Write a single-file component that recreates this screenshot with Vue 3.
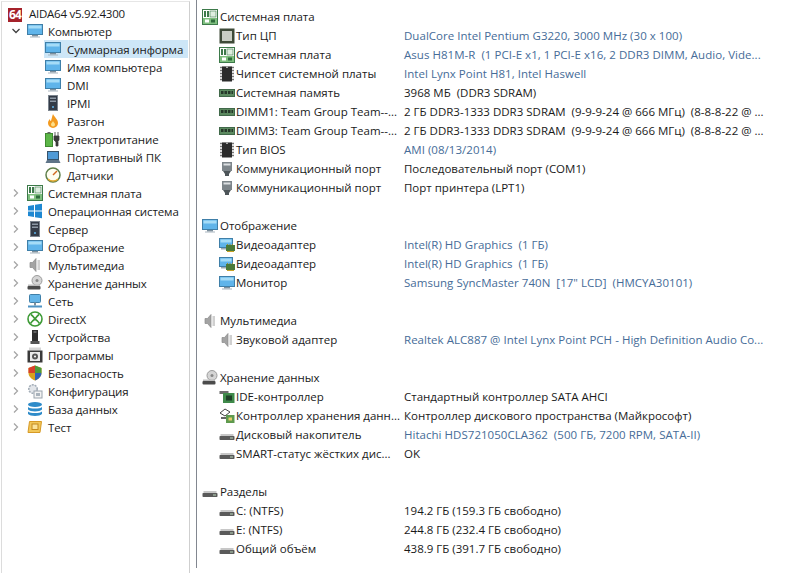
<template>
  <div class="app">
    <!-- shared icons -->
    <svg class="defs" width="0" height="0" aria-hidden="true">
      <defs>
        <symbol id="i-monitor" viewBox="0 0 16 16">
          <rect x="0.500" y="1.500" width="15" height="10" fill="#5fb4ea" stroke="#3f7fa8" />
          <rect x="1.500" y="2.500" width="13" height="3" fill="#a5dcf7" />
          <rect x="5" y="12" width="6" height="1.500" fill="#7d8f9c" />
          <rect x="3" y="13.500" width="10" height="1" fill="#a9b6bf" />
        </symbol>
        <symbol id="i-board" viewBox="0 0 16 16">
          <rect x="0.500" y="0.500" width="15" height="15" fill="#fff" stroke="#3d7a4a" />
          <rect x="2" y="2" width="2" height="6" fill="#3d7a4a" />
          <rect x="5" y="2" width="2" height="6" fill="#3d7a4a" />
          <rect x="8" y="2" width="6" height="6" fill="#dfeee0" stroke="#3d7a4a" stroke-width="0.600" />
          <rect x="1" y="9" width="14" height="6" fill="#7fbf7f" />
          <rect x="3" y="10.500" width="4" height="3" fill="#fff" />
          <rect x="9" y="10.500" width="4" height="3" fill="#2f6b3c" />
        </symbol>
        <symbol id="i-win" viewBox="0 0 16 16">
          <path d="M1 3l6-1v5.500H1zM8 1.800L15 .7v6.800H8zM1 8.500h6V14l-6-1zM8 8.500h7v6.800l-7-1.100z" fill="#1e88d2" />
        </symbol>
        <symbol id="i-server" viewBox="0 0 16 16">
          <rect x="3.500" y="0.500" width="9" height="15" fill="#333b47" stroke="#7b848e" />
          <rect x="5" y="2.500" width="6" height="1.500" fill="#8d99a6" />
          <rect x="5" y="5.500" width="6" height="1.500" fill="#8d99a6" />
          <circle cx="8" cy="12" r="1" fill="#5fb4ea" />
        </symbol>
        <symbol id="i-speaker" viewBox="0 0 16 16">
          <path d="M3 5.500h2.500L9 1.500v13l-3.500-4H3z" fill="#a3a3a3" stroke="#8a8a8a" stroke-width="0.700" />
          <rect x="10.500" y="3" width="2.500" height="10" fill="#d0d0d0" />
        </symbol>
        <symbol id="i-storage" viewBox="0 0 16 16">
          <circle cx="10" cy="5.500" r="5" fill="#d5d5d5" stroke="#9c9c9c" />
          <circle cx="10" cy="5.500" r="1.500" fill="#888" />
          <rect x="0.500" y="11" width="13" height="3.500" rx="1" fill="#4b4b4b" />
          <rect x="1" y="9.500" width="12" height="1.500" fill="#bdbdbd" />
        </symbol>
        <symbol id="i-disk" viewBox="0 0 16 16">
          <rect x="1.500" y="7" width="13" height="2" fill="#c7c7c7" />
          <rect x="0.500" y="9" width="15" height="4" rx="0.800" fill="#5a5a5a" />
          <rect x="11" y="10.500" width="3" height="1" fill="#b9d8b9" />
        </symbol>
        <symbol id="i-net" viewBox="0 0 16 16">
          <rect x="2.500" y="1.500" width="11" height="8" rx="1" fill="#64b5e8" stroke="#3f7fa8" />
          <rect x="7" y="9.500" width="2" height="3" fill="#7d8f9c" />
          <rect x="1" y="12.500" width="14" height="2" fill="#4f93c4" />
        </symbol>
        <symbol id="i-xbox" viewBox="0 0 16 16">
          <circle cx="8" cy="8" r="7" fill="#fff" stroke="#3c9a35" stroke-width="1.600" />
          <path d="M4 3.500C6 5 7 6.500 8 8 9 6.500 10 5 12 3.500M3.500 12.500C5 10 6.500 9 8 8 9.500 9 11 10 12.500 12.500" fill="none" stroke="#3c9a35" stroke-width="1.600" />
        </symbol>
        <symbol id="i-device" viewBox="0 0 16 16">
          <path d="M5 1h6v11H5z" fill="#2d2d2d" />
          <rect x="3.500" y="12" width="9" height="3" fill="#555" />
          <rect x="6.500" y="2.500" width="3" height="1" fill="#999" />
        </symbol>
        <symbol id="i-apps" viewBox="0 0 16 16">
          <rect x="2" y="0.500" width="12" height="3" fill="#d6d6d6" />
          <rect x="0.500" y="3.500" width="15" height="12" fill="#3a3a3a" />
          <rect x="3" y="5" width="10" height="9" fill="#e9e9e9" />
          <circle cx="8" cy="9.500" r="3" fill="#555" />
          <circle cx="8" cy="9.500" r="1" fill="#fff" />
        </symbol>
        <symbol id="i-shield" viewBox="0 0 16 16">
          <path d="M8 .5L14.500 3v5c0 3.500-3 6-6.500 7.500C4.500 14 1.500 11.500 1.500 8V3z" fill="#d8a21e" />
          <path d="M8 .5V8H1.500V3z" fill="#d8402c" />
          <path d="M8 8h6.500c0 3.500-3 6-6.500 7.500z" fill="#2f62b8" />
          <path d="M8 .5L14.500 3v5H8z" fill="#4d9b3c" />
        </symbol>
        <symbol id="i-config" viewBox="0 0 16 16">
          <circle cx="6" cy="6" r="4.200" fill="#e3e6ea" stroke="#a3adb7" stroke-dasharray="2 1" stroke-width="1.600" />
          <rect x="7" y="8" width="8" height="7" fill="#f3f3f3" stroke="#9aa4ad" />
          <rect x="9" y="10" width="4" height="3" fill="#a9b3bc" />
        </symbol>
        <symbol id="i-db" viewBox="0 0 16 16">
          <ellipse cx="8" cy="3.500" rx="7" ry="2.500" fill="#2e8bc9" />
          <path d="M1 6c2 2 12 2 14 0v2.500c-2 2.500-12 2.500-14 0z" fill="#2e8bc9" />
          <path d="M1 10.500c2 2 12 2 14 0V13c-2 2.500-12 2.500-14 0z" fill="#2e8bc9" />
        </symbol>
        <symbol id="i-test" viewBox="0 0 16 16">
          <path d="M2.500 2.500h12l-1.500 11H1z" fill="#f1c75a" stroke="#d79a25" />
          <rect x="5" y="5" width="6" height="5.500" fill="#fbe39a" stroke="#c48a1e" />
        </symbol>
        <symbol id="i-fire" viewBox="0 0 16 16">
          <path d="M8 1c1 3 5 5 5 9a5 5 0 0 1-10 0c0-2 1-3 2-4 0 1.500.5 2 1 2 .5-2 1-4 2-7z" fill="#f39a1f" />
          <path d="M8 8c.5 1.500 2 2 2 3.500a2 2 0 0 1-4 0C6 10 7.500 9.500 8 8z" fill="#fde08a" />
        </symbol>
        <symbol id="i-power" viewBox="0 0 16 16">
          <rect x="0.500" y="2.500" width="7" height="13" fill="#5cb648" stroke="#3e8a30" />
          <rect x="2.500" y="1" width="3" height="1.500" fill="#666" />
          <path d="M10 1v4M13 1v4M9 5h5v4l-1.500 2H13v4h-2v-4L9 9z" fill="#3b3b3b" stroke="#3b3b3b" stroke-width="0.800" />
        </symbol>
        <symbol id="i-laptop" viewBox="0 0 16 16">
          <rect x="2.500" y="2.500" width="11" height="8" fill="#4f9ad6" stroke="#36536b" />
          <path d="M2 11h12l1.500 3H.5z" fill="#5e7488" />
        </symbol>
        <symbol id="i-gauge" viewBox="0 0 16 16">
          <circle cx="8" cy="8" r="7" fill="#fffdf0" stroke="#5e7f4a" stroke-width="1.500" />
          <path d="M8 8L12 4" stroke="#d2691e" stroke-width="1.500" />
          <path d="M3 12a7 7 0 0 0 10 0" fill="none" stroke="#e0a72e" stroke-width="1.500" />
        </symbol>
        <symbol id="i-cpu" viewBox="0 0 16 16">
          <rect x="0.500" y="0.500" width="15" height="15" fill="#3e4a38" />
          <rect x="3" y="3" width="10" height="10" fill="#c9cec4" />
        </symbol>
        <symbol id="i-chip" viewBox="0 0 16 16">
          <path d="M1 1.500h14M1 4.500h14M1 7.500h14M1 10.500h14M1 13.500h14" stroke="#777" stroke-width="1.500" />
          <rect x="3" y="0.500" width="10" height="15" fill="#2b2b2b" />
          <path d="M7 0.500h2v1.500H7z" fill="#aaa" />
        </symbol>
        <symbol id="i-ram" viewBox="0 0 16 16">
          <rect x="0.500" y="4.500" width="15" height="7" fill="#5c8a60" stroke="#41694a" />
          <path d="M2 6h2.500v3H2zM5.500 6H8v3H5.500zM9 6h2.500v3H9zM12.500 6H14v3h-1.500z" fill="#26382a" />
        </symbol>
        <symbol id="i-port" viewBox="0 0 16 16">
          <rect x="3" y="1" width="10" height="9" fill="#7d858a" />
          <rect x="4.500" y="2.500" width="7" height="2" fill="#dcdfe1" />
          <path d="M4 10h8l-2 3v2H6v-2z" fill="#4d5559" />
        </symbol>
        <symbol id="i-gpu" viewBox="0 0 16 16">
          <rect x="0.500" y="1.500" width="13" height="9" fill="#5fb4ea" stroke="#3f7fa8" />
          <rect x="1.500" y="2.500" width="11" height="3" fill="#a5dcf7" />
          <rect x="2" y="11" width="8" height="1.500" fill="#9aa7b1" />
          <rect x="7" y="8" width="9" height="6" fill="#4a7a3a" />
          <path d="M8.500 8v-1M11 8v-1M13.500 8v-1" stroke="#a88b2b" stroke-width="1" />
          <rect x="8" y="14" width="7" height="1" fill="#c9a227" />
        </symbol>
        <symbol id="i-ide" viewBox="0 0 16 16">
          <rect x="0.500" y="2" width="9" height="3" fill="#6d6d6d" />
          <rect x="4" y="4" width="11.500" height="10" fill="#3f8a4a" />
          <rect x="7" y="6.500" width="6" height="5" fill="#1e3f28" />
        </symbol>
        <symbol id="i-ctrl" viewBox="0 0 16 16">
          <path d="M1 5l5-4 5 3-5 4z" fill="#fff" stroke="#444" />
          <path d="M2 9h5v2H2z" fill="#666" />
          <rect x="7" y="7" width="8.500" height="8" fill="#5e9a4e" />
          <rect x="9.500" y="9.500" width="3.500" height="3" fill="#e3cc6b" />
        </symbol>
      </defs>
    </svg>

    <aside class="tree">
      <div class="tree-title">
        <span class="logo">64</span>
        <span>AIDA64 v5.92.4300</span>
      </div>

      <div class="tree-row">
        <svg class="chev open" viewBox="0 0 10 10"><path d="M1.500 3l3.500 3.500L8.500 3" /></svg>
        <svg class="ico"><use href="#i-monitor" /></svg>
        <span>Компьютер</span>
      </div>
      <div
        v-for="item in computerItems"
        :key="item.label"
        class="tree-row child"
        :class="{ selected: item.selected }"
      >
        <svg class="ico"><use :href="'#' + item.icon" /></svg>
        <span>{{ item.label }}</span>
      </div>

      <div v-for="item in topItems" :key="item.label" class="tree-row">
        <svg class="chev" viewBox="0 0 10 10"><path d="M3 1.500L6.500 5 3 8.500" /></svg>
        <svg class="ico"><use :href="'#' + item.icon" /></svg>
        <span>{{ item.label }}</span>
      </div>
    </aside>

    <main class="details">
      <section v-for="group in groups" :key="group.title" class="group">
        <div class="group-head">
          <svg class="ico"><use :href="'#' + group.icon" /></svg>
          <span>{{ group.title }}</span>
        </div>
        <div v-for="(row, i) in group.rows" :key="i" class="row">
          <div class="row-name">
            <svg class="ico"><use :href="'#' + row.icon" /></svg>
            <span>{{ row.name }}</span>
          </div>
          <div class="row-value" :class="{ link: row.link }">{{ row.value }}</div>
        </div>
      </section>
    </main>
  </div>
</template>

<script setup>
const computerItems = [
  { icon: 'i-monitor', label: 'Суммарная информа', selected: true },
  { icon: 'i-monitor', label: 'Имя компьютера' },
  { icon: 'i-monitor', label: 'DMI' },
  { icon: 'i-server', label: 'IPMI' },
  { icon: 'i-fire', label: 'Разгон' },
  { icon: 'i-power', label: 'Электропитание' },
  { icon: 'i-laptop', label: 'Портативный ПК' },
  { icon: 'i-gauge', label: 'Датчики' },
]

const topItems = [
  { icon: 'i-board', label: 'Системная плата' },
  { icon: 'i-win', label: 'Операционная система' },
  { icon: 'i-server', label: 'Сервер' },
  { icon: 'i-monitor', label: 'Отображение' },
  { icon: 'i-speaker', label: 'Мультимедиа' },
  { icon: 'i-storage', label: 'Хранение данных' },
  { icon: 'i-net', label: 'Сеть' },
  { icon: 'i-xbox', label: 'DirectX' },
  { icon: 'i-device', label: 'Устройства' },
  { icon: 'i-apps', label: 'Программы' },
  { icon: 'i-shield', label: 'Безопасность' },
  { icon: 'i-config', label: 'Конфигурация' },
  { icon: 'i-db', label: 'База данных' },
  { icon: 'i-test', label: 'Тест' },
]

const groups = [
  {
    title: 'Системная плата',
    icon: 'i-board',
    rows: [
      { icon: 'i-cpu', name: 'Тип ЦП', value: 'DualCore Intel Pentium G3220, 3000 MHz (30 x 100)', link: true },
      { icon: 'i-board', name: 'Системная плата', value: 'Asus H81M-R  (1 PCI-E x1, 1 PCI-E x16, 2 DDR3 DIMM, Audio, Vide...', link: true },
      { icon: 'i-chip', name: 'Чипсет системной платы', value: 'Intel Lynx Point H81, Intel Haswell', link: true },
      { icon: 'i-ram', name: 'Системная память', value: '3968 МБ  (DDR3 SDRAM)' },
      { icon: 'i-ram', name: 'DIMM1: Team Group Team--...', value: '2 ГБ DDR3-1333 DDR3 SDRAM  (9-9-9-24 @ 666 МГц)  (8-8-8-22 @ ...' },
      { icon: 'i-ram', name: 'DIMM3: Team Group Team--...', value: '2 ГБ DDR3-1333 DDR3 SDRAM  (9-9-9-24 @ 666 МГц)  (8-8-8-22 @ ...' },
      { icon: 'i-chip', name: 'Тип BIOS', value: 'AMI (08/13/2014)', link: true },
      { icon: 'i-port', name: 'Коммуникационный порт', value: 'Последовательный порт (COM1)' },
      { icon: 'i-port', name: 'Коммуникационный порт', value: 'Порт принтера (LPT1)' },
    ],
  },
  {
    title: 'Отображение',
    icon: 'i-monitor',
    rows: [
      { icon: 'i-gpu', name: 'Видеоадаптер', value: 'Intel(R) HD Graphics  (1 ГБ)', link: true },
      { icon: 'i-gpu', name: 'Видеоадаптер', value: 'Intel(R) HD Graphics  (1 ГБ)', link: true },
      { icon: 'i-monitor', name: 'Монитор', value: 'Samsung SyncMaster 740N  [17" LCD]  (HMCYA30101)', link: true },
    ],
  },
  {
    title: 'Мультимедиа',
    icon: 'i-speaker',
    rows: [
      { icon: 'i-speaker', name: 'Звуковой адаптер', value: 'Realtek ALC887 @ Intel Lynx Point PCH - High Definition Audio Co...', link: true },
    ],
  },
  {
    title: 'Хранение данных',
    icon: 'i-storage',
    rows: [
      { icon: 'i-ide', name: 'IDE-контроллер', value: 'Стандартный контроллер SATA AHCI' },
      { icon: 'i-ctrl', name: 'Контроллер хранения данн...', value: 'Контроллер дискового пространства (Майкрософт)' },
      { icon: 'i-disk', name: 'Дисковый накопитель', value: 'Hitachi HDS721050CLA362  (500 ГБ, 7200 RPM, SATA-II)', link: true },
      { icon: 'i-disk', name: 'SMART-статус жёстких дис...', value: 'OK' },
    ],
  },
  {
    title: 'Разделы',
    icon: 'i-disk',
    rows: [
      { icon: 'i-disk', name: 'C: (NTFS)', value: '194.2 ГБ (159.3 ГБ свободно)' },
      { icon: 'i-disk', name: 'E: (NTFS)', value: '244.8 ГБ (232.4 ГБ свободно)' },
      { icon: 'i-disk', name: 'Общий объём', value: '438.9 ГБ (391.7 ГБ свободно)' },
    ],
  },
]
</script>

<style scoped>
.app {
  display: flex;
  width: 804px;
  height: 576px;
  overflow: hidden;
  background: #fff;
  color: #1a1a1a;
  font-family: "Open Sans", "Noto Sans", sans-serif;
  font-size: 11.5px;
}
.defs { position: absolute; }
.ico { width: 16px; height: 16px; flex: none; }

/* ── Tree ─────────────────────────── */
.tree {
  width: 189px;
  height: 572px;
  flex: none;
  padding-top: 2px;
  box-sizing: border-box;
  margin-top: 1px;
  margin-left: 1px;
  border-top: 1px solid #e6e6e6;
  border-left: 1px solid #dcdcdc;
  border-right: 1px solid #cfcfcf;
  letter-spacing: -0.1px;
  overflow: hidden;
}
.tree-title, .tree-row {
  display: flex;
  align-items: center;
  height: 18px;
  white-space: nowrap;
}
.tree-title { padding-left: 6px; gap: 7px; letter-spacing: -0.25px; }
.logo {
  width: 14px;
  height: 14px;
  margin-top: 4px;
  background: #a5222b;
  color: #fff;
  font-size: 12px;
  font-weight: 700;
  line-height: 14px;
  text-align: center;
  letter-spacing: -0.8px;
}
.tree-row { padding-left: 9px; }
.tree-row .ico { margin: 0 5px 0 6px; }
.chev { width: 10px; height: 10px; flex: none; }
.chev path { fill: none; stroke: #a6a6a6; stroke-width: 1.300; }
.chev.open path { stroke: #404040; }
.tree-row.child { padding-left: 1px; margin: 0 1px 0 42px; }
.tree-row.child .ico { margin: 0 6px 0 0; }
.tree-row.selected { background: #cde6f7; }

/* ── Details ──────────────────────── */
.details {
  flex: 1;
  margin: 0 0 8px 6px;
  padding-top: 7px;
  border-left: 1px solid #828790;
}
.group { margin-bottom: 19px; }
.group-head, .row {
  display: flex;
  align-items: center;
  height: 19px;
  white-space: nowrap;
}
.group-head { padding-left: 5px; letter-spacing: -0.05px; }
.group-head .ico { margin-right: 2px; }
.row-name {
  display: flex;
  align-items: center;
  width: 207px;
  flex: none;
  box-sizing: border-box;
  padding-left: 22px;
}
.row-name .ico { margin-right: 1px; }
.row-value { white-space: pre; }
.row-value.link { color: #466c98; letter-spacing: 0.03px; }
</style>
